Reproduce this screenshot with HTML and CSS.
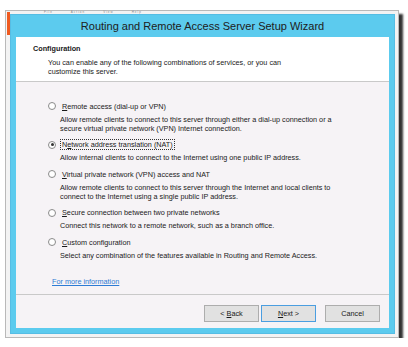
FILE: index.html
```html
<!DOCTYPE html>
<html lang="en">
<head>
    <meta charset="UTF-8">
    <title>Routing and Remote Access Server Setup Wizard</title>
    <link rel="stylesheet" href="styles.css">
</head>
<body>
    <div class="shot">
        <div class="edge"></div>
        <div class="window">
            <!-- app menu peeking out behind the wizard -->
            <div class="menu"><span>File</span><span>Action</span><span>View</span><span>Help</span></div>

            <div class="dialog">
                <div class="title">Routing and Remote Access Server Setup Wizard</div>

                <div class="header">
                    <div class="heading">Configuration</div>
                    <div class="sub">You can enable any of the following combinations of services, or you can<br>customize this server.</div>
                </div>

                <div class="content">
                    <div class="opt">
                        <div class="opt-label"><span class="radio"></span><span class="txt"><u>R</u>emote access (dial-up or VPN)</span></div>
                        <p class="desc">Allow remote clients to connect to this server through either a dial-up connection or a<br>secure virtual private network (VPN) Internet connection.</p>
                    </div>
                    <div class="opt">
                        <div class="opt-label"><span class="radio checked"></span><span class="txt focus">N<u>e</u>twork address translation (NAT)</span></div>
                        <p class="desc">Allow internal clients to connect to the Internet using one public IP address.</p>
                    </div>
                    <div class="opt">
                        <div class="opt-label"><span class="radio"></span><span class="txt"><u>V</u>irtual private network (VPN) access and NAT</span></div>
                        <p class="desc">Allow remote clients to connect to this server through the Internet and local clients to<br>connect to the Internet using a single public IP address.</p>
                    </div>
                    <div class="opt">
                        <div class="opt-label"><span class="radio"></span><span class="txt"><u>S</u>ecure connection between two private networks</span></div>
                        <p class="desc">Connect this network to a remote network, such as a branch office.</p>
                    </div>
                    <div class="opt">
                        <div class="opt-label"><span class="radio"></span><span class="txt"><u>C</u>ustom configuration</span></div>
                        <p class="desc">Select any combination of the features available in Routing and Remote Access.</p>
                    </div>

                    <a class="more" href="#">For more information</a>
                </div>

                <div class="footer">
                    <button class="btn back">&lt; <u>B</u>ack</button>
                    <button class="btn next"><u>N</u>ext &gt;</button>
                    <button class="btn">Cancel</button>
                </div>
            </div>
        </div>
    </div>
</body>
</html>
```

FILE: styles.css
```css
body {
    margin: 0;
    background-color: #ffffff;
    font-family: "Liberation Sans", Arial, sans-serif;
    color: #1a1a1a;
}

/* the framed screenshot */
.shot {
    display: flex;
    align-items: flex-start;
    width: 392px;
    height: 326px;
    margin: 10px 0 0 5px;
    border: 1px solid #b9b9b9;
    background-color: #f3f3f3;
    box-shadow: 4px 4px 2px rgba(0, 0, 0, 0.8);
}

.edge {
    width: 3px;
    height: 23px;
    margin: 1px 0 0 1px;
    background-color: #ef5a1f;
}

.window {
    display: flex;
    flex-direction: column;
}

.menu {
    height: 3px;
    padding-left: 34px;
    font-size: 3px;
    line-height: 3px;
    color: #8a8a8a;
    white-space: nowrap;
}

.menu span {
    margin-right: 18px;
    letter-spacing: 1px;
}

.dialog {
    width: 373px;
    padding: 0 5px 5px;
    border: 1px solid #56bde4;
    background-color: #5ccbee;
}

.title {
    height: 22px;
    line-height: 22px;
    text-align: center;
    font-size: 11px;
    color: #202020;
}

.header {
    height: 37px;
    padding: 7px 0 0 17px;
    background-color: #ffffff;
    border-bottom: 1px solid #c9c9c9;
}

.heading {
    font-size: 7.25px;
    font-weight: bold;
    line-height: 10px;
}

.sub {
    margin: 4px 0 0 15px;
    font-size: 7.25px;
    line-height: 9px;
}

.content {
    height: 193px;
    padding: 19px 0 0 32px;
    background-color: #f6f3f6;
    border-bottom: 1px solid #c9c9c9;
}

.opt {
    margin-bottom: 7px;
}

.opt-label {
    display: flex;
    align-items: center;
    height: 10px;
    font-size: 7.25px;
}

.radio {
    width: 6px;
    height: 6px;
    margin-right: 4px;
    border: 1px solid #8a8a8a;
    border-radius: 50%;
    background-color: #ffffff;
    position: relative;
}

.radio.checked::after {
    content: '';
    position: absolute;
    left: 1.5px;
    top: 1.5px;
    width: 3px;
    height: 3px;
    border-radius: 50%;
    background-color: #333333;
}

.txt {
    padding: 0 1px;
    border: 1px solid transparent;
    line-height: 9px;
}

.txt.focus {
    border: 1px dotted #333333;
}

.desc {
    margin: 3.5px 0 0 12px;
    font-size: 7.25px;
    line-height: 9px;
}

.more {
    display: inline-block;
    margin: 10px 0 0 4px;
    font-size: 7.25px;
    line-height: 10px;
    color: #2d7bd4;
}

.footer {
    display: flex;
    justify-content: flex-end;
    height: 23px;
    padding: 10px 9px 0 0;
    background-color: #f6f3f6;
}

.btn {
    width: 55px;
    height: 17px;
    padding: 0;
    border: 1px solid #adadad;
    background-color: #e1e1e1;
    font-family: "Liberation Sans", Arial, sans-serif;
    font-size: 7.25px;
    color: #1a1a1a;
}

.btn.back {
    margin-right: 2px;
}

.btn.next {
    margin-right: 9px;
    border-color: #4b9ee0;
}
```
